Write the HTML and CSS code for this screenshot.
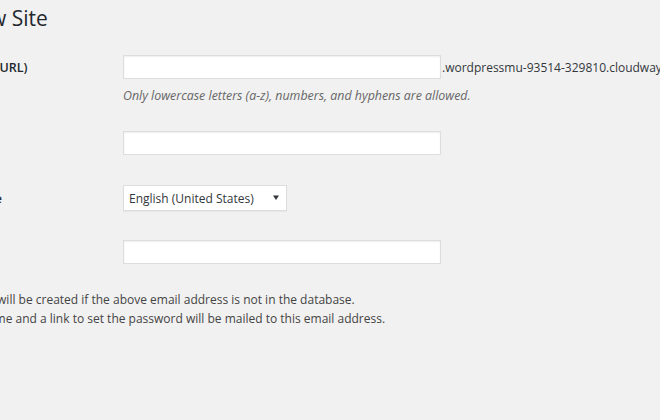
FILE: index.html
```html
<!DOCTYPE html>
<html lang="en">
<head>
<meta charset="utf-8">
<title>Add New Site</title>
<link rel="stylesheet" href="styles.css">
</head>
<body>
<div class="wrap">
  <h1 class="title">Add New Site</h1>
  <form class="form">
    <div class="row row-addr">
      <label class="th" for="site-address">Site Address (URL)</label>
      <div class="td">
        <div class="addr">
          <input id="site-address" class="text" type="text">
          <span class="domain">.wordpressmu-93514-329810.cloudways.com</span>
        </div>
        <p class="desc">Only lowercase letters (a-z), numbers, and hyphens are allowed.</p>
      </div>
    </div>
    <div class="row row-title">
      <label class="th" for="site-title">Site Title</label>
      <div class="td"><input id="site-title" class="text" type="text"></div>
    </div>
    <div class="row row-lang">
      <label class="th">Site Language</label>
      <div class="td">
        <div class="select"><span>English (United States)</span><svg width="8" height="6" viewBox="0 0 8 6"><path d="M1 0.5h6L4 5z" fill="#32373c"/></svg></div>
      </div>
    </div>
    <div class="row row-email">
      <label class="th" for="admin-email">Admin Email</label>
      <div class="td"><input id="admin-email" class="text" type="text"></div>
    </div>
    <p class="note">A new user will be created if the above email address is not in the database.<br>The username and a link to set the password will be mailed to this email address.</p>
  </form>
</div>
</body>
</html>
```
FILE: styles.css
```css
html, body {
  margin: 0;
  padding: 0;
  background: #f1f1f1;
}
body {
  font-family: "Open Sans", "Noto Sans", sans-serif;
  font-size: 12px;
  color: #444;
  overflow: hidden;
}
.wrap {
  margin-left: -97px;
  width: 900px;
}
.title {
  margin: 0;
  padding: 4px 0 0 15px;
  height: 30px;
  font-size: 21px;
  font-weight: 400;
  line-height: 29px;
  color: #23282d;
}
.form {
  margin: 0;
}
.row {
  display: grid;
  grid-template-columns: 220px 1fr;
  align-items: start;
}
.th {
  padding: 2px 0 0 15px;
  font-size: 12.5px;
  font-weight: 600;
  color: #23282d;
  line-height: 22px;
}
.row-addr { margin-top: 21px; }
.row-title { margin-top: 26px; }
.row-lang { margin-top: 30px; }
.row-email { margin-top: 29px; }
.row-lang .th { line-height: 24px; }
.addr {
  display: flex;
  align-items: center;
  white-space: nowrap;
}
.text {
  box-sizing: border-box;
  width: 318px;
  height: 24px;
  margin: 0;
  padding: 2px 6px;
  border: 1px solid #ddd;
  box-shadow: inset 0 1px 2px rgba(0,0,0,.07);
  background: #fff;
  font: inherit;
  outline: none;
  display: block;
}
.domain {
  margin-left: 1px;
  font-size: 12px;
  color: #32373c;
}
.desc {
  margin: 7px 0 0;
  font-style: italic;
  font-size: 12.4px;
  line-height: 19px;
  color: #666;
}
.select {
  box-sizing: border-box;
  width: 164px;
  height: 26px;
  display: flex;
  align-items: center;
  justify-content: space-between;
  padding: 0 6px 0 5px;
  border: 1px solid #ddd;
  box-shadow: 0 1px 1px rgba(0,0,0,.04);
  background: #fff;
  color: #32373c;
  font-size: 12px;
}
.select svg { display: block; }
.note {
  margin: 26px 0 0 29px;
  line-height: 19px;
  color: #444;
}
```
